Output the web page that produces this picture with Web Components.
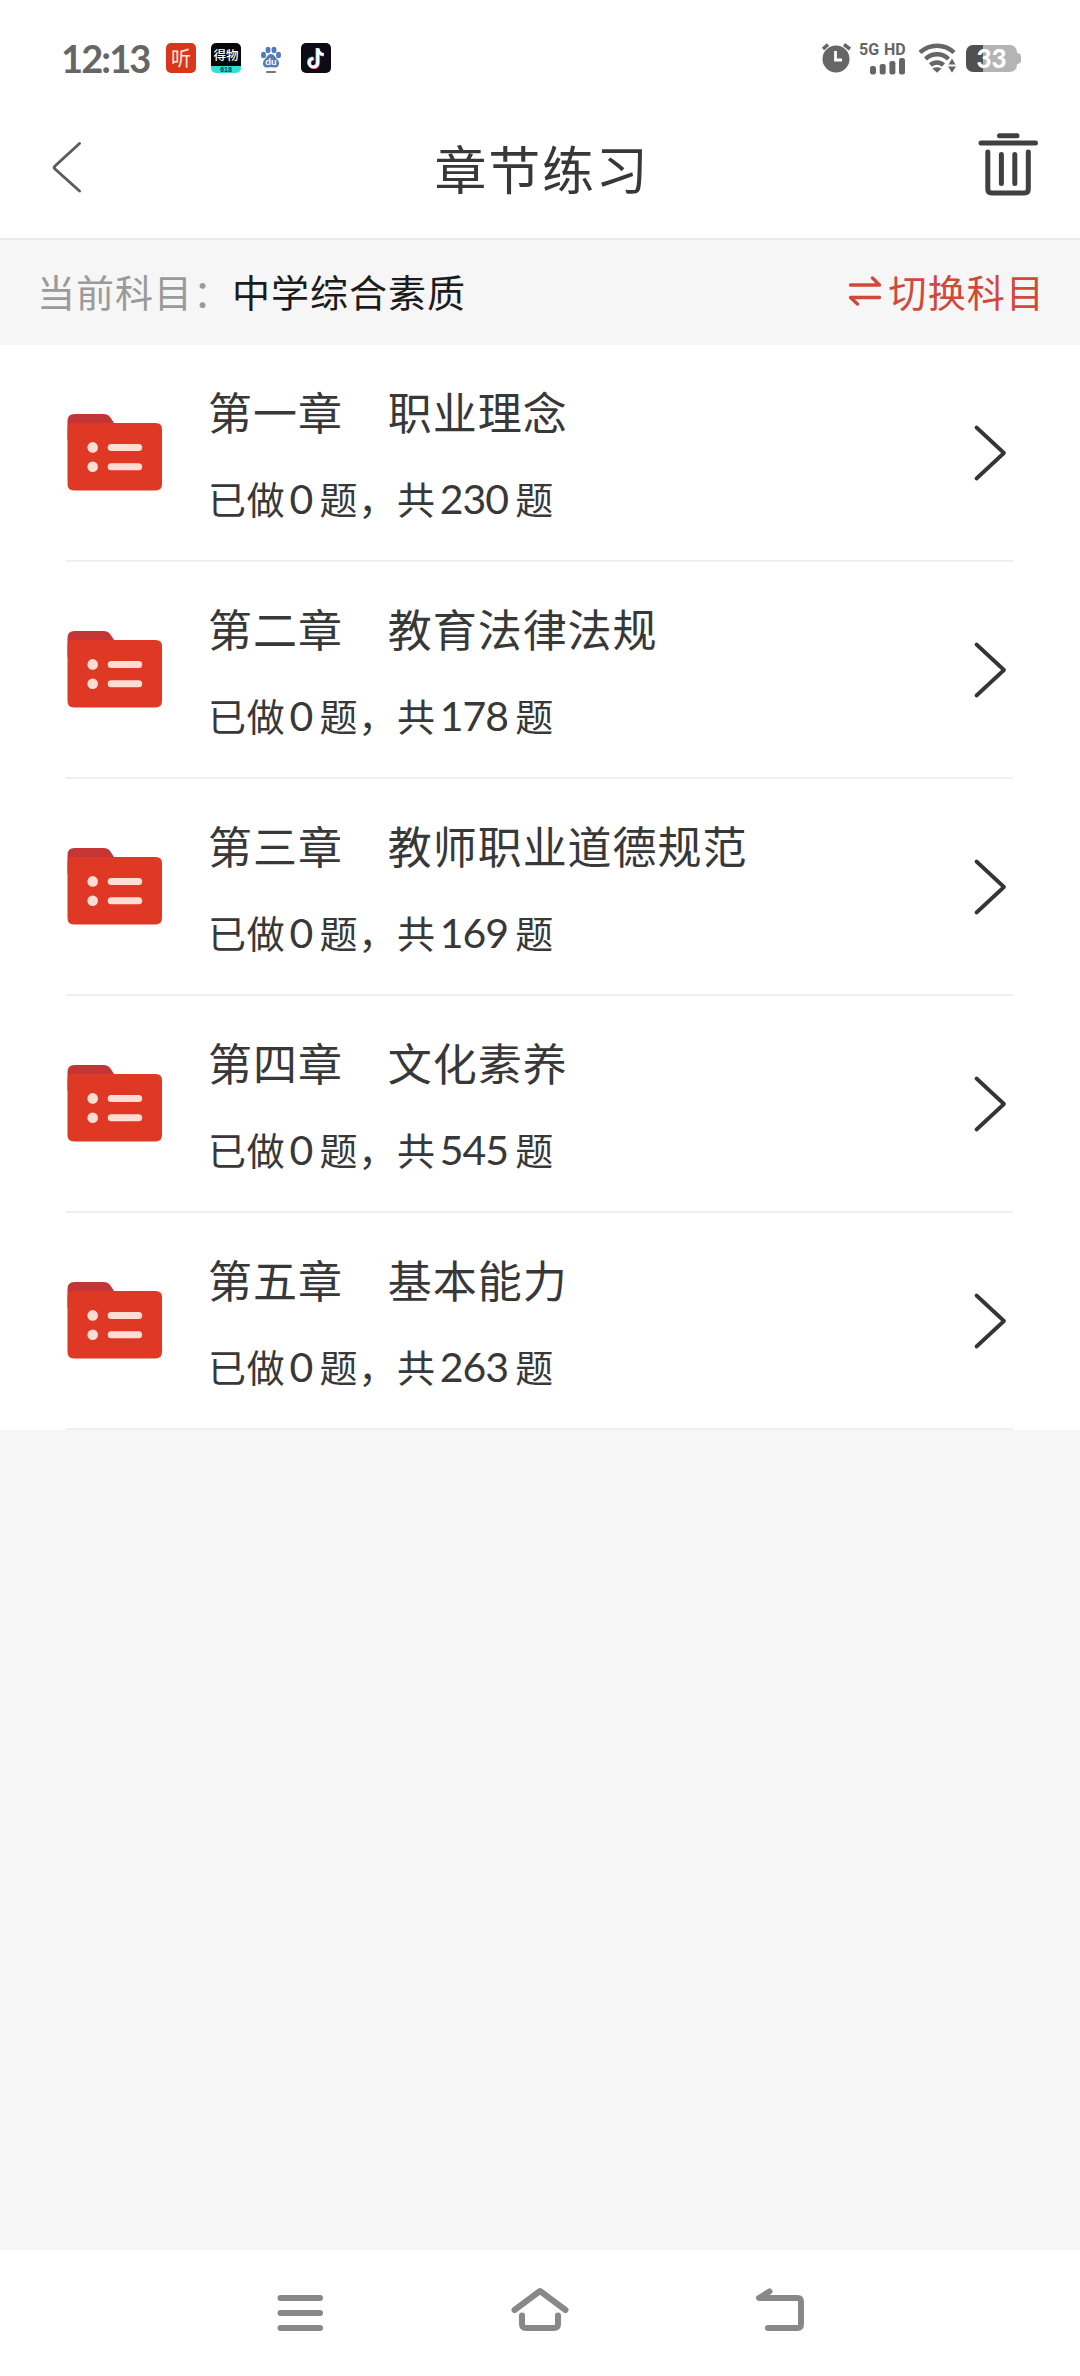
<!DOCTYPE html>
<html lang="zh-CN">
<head>
<meta charset="utf-8">
<title>章节练习</title>
<style>
html,body{margin:0;padding:0;background:#f6f6f6}
body{width:1080px;height:2376px;overflow:hidden;font-family:"Noto Sans CJK SC",sans-serif;color:#383838}
</style>
</head>
<body>
<practice-screen>
  <status-bar slot="top" time="12:13" level="33"></status-bar>
  <title-bar slot="top">章节练习</title-bar>
  <subject-bar slot="top" label="当前科目：" action="切换科目">中学综合素质</subject-bar>
  <chapter-row done="0" total="230">第一章　职业理念</chapter-row>
  <chapter-row done="0" total="178">第二章　教育法律法规</chapter-row>
  <chapter-row done="0" total="169">第三章　教师职业道德规范</chapter-row>
  <chapter-row done="0" total="545">第四章　文化素养</chapter-row>
  <chapter-row done="0" total="263">第五章　基本能力</chapter-row>
  <nav-bar slot="bottom"></nav-bar>
</practice-screen>
<script>
function define(name, render) {
  customElements.define(name, class extends HTMLElement {
    constructor() {
      super();
      this.attachShadow({mode: 'open'});
    }
    connectedCallback() {
      this.shadowRoot.innerHTML = render(this);
    }
  });
}

define('practice-screen', () => `
<style>
:host{display:flex;flex-direction:column;width:1080px;height:2376px;background:#f6f6f6}
main{flex:1}
.list{background:#fff}
</style>
<slot name="top"></slot>
<main><div class="list"><slot></slot></div></main>
<slot name="bottom"></slot>`);

define('status-bar', el => `
<style>
:host{display:flex;justify-content:space-between;box-sizing:border-box;height:84px;padding:32px 59px 0 61px;background:#fff;color:#666}
.left,.right{display:flex;height:52px;align-items:center}
.time{font:700 38px/52px Lato,sans-serif;width:105px;letter-spacing:-1.900px;white-space:nowrap}
.app{width:30px;height:30px;margin-right:15px;border-radius:5px;display:flex;flex-direction:column;align-items:center;box-sizing:border-box;white-space:nowrap}
.ting{background:#d8371b;color:#ffe9dc;font:400 20px/29px "Noto Sans CJK SC",sans-serif}
.dewu{background:linear-gradient(#050808 23px,#35dcd8 23px);color:#fff;font:500 12.500px/23px "Noto Sans CJK SC",sans-serif}
.dewu b{font:700 7px/7px "Liberation Sans",sans-serif;color:#044}
.app svg{display:block}
.net{width:48px;display:flex;flex-direction:column;align-items:flex-start;margin:0 12px 0 8px}
.net span{font:700 16px/15px Roboto,sans-serif;white-space:nowrap;height:15px;word-spacing:1px}
.net svg{margin-left:11px}
.bat{display:flex;width:51px;height:27px;border-radius:7px;background:linear-gradient(90deg,#505050 17px,#b4b4b4 17px);color:#fff;justify-content:center;font:900 26px/27px Lato,sans-serif;margin-left:9px}
.nub{width:4px;height:11px;background:#b4b4b4;border-radius:0 5px 5px 0}
svg{display:block;flex:none}
</style>
<div class="left">
  <span class="time">${el.getAttribute('time')}</span>
  <span class="app ting">听</span>
  <span class="app dewu">得物<b>618</b></span>
  <span class="app"><svg width="30" height="30" viewBox="0 0 30 30"><g fill="#527bb9"><ellipse cx="7.5" cy="12" rx="2.5" ry="3.2"/><ellipse cx="12" cy="7" rx="2.5" ry="3.3"/><ellipse cx="18" cy="7" rx="2.5" ry="3.3"/><ellipse cx="22.5" cy="12" rx="2.5" ry="3.2"/><path d="M15 11c-3 0-4 3-6 5-4 4-1.500 9 2 8.500 3-.5 5-.5 8 0 3.500.5 6-4.500 2-8.500-2-2-3-5-6-5z"/></g><text x="15" y="22" text-anchor="middle" font-family="Lato,sans-serif" font-weight="700" font-size="10" fill="#fff">du</text><rect x="10" y="28" width="10" height="2" rx="1" fill="#777"/></svg></span>
  <span class="app" style="background:#0d0b15"><svg width="30" height="30" viewBox="0 0 30 30" fill="none" stroke-width="3"><path d="M16 5v14.200a4.300 4.300 0 1 1-4.300-4.300M16 6.500c.5 3 2.700 5 6 5.200" stroke="#45d8dc"/><path d="M17.600 6.300v14a4.300 4.300 0 1 1-4.300-4.300M17.500 7c.6 3 2.800 5 5.500 5.200" stroke="#e63862"/><path d="M16.800 5.300v14.500a4.300 4.300 0 1 1-4.300-4.300M17 6c.5 3.200 2.700 5.300 5.800 5.600" stroke="#fff"/></svg></span>
</div>
<div class="right">
  <svg width="30" height="32" viewBox="819 43 30 32"><circle cx="834" cy="60" r="13.500" fill="#666"/><path d="M821 50l5-4.500M842 45.500l6 4.500" stroke="#666" stroke-width="3.600"/><path d="M833.500 52v9h6.500" fill="none" stroke="#fff" stroke-width="2.800"/></svg>
  <div class="net"><span>5G HD</span><svg width="36" height="18" viewBox="0 0 36 18" fill="#666"><rect y="9" width="6" height="8.500" rx="2.200"/><rect x="9.700" y="7" width="6" height="10.500" rx="2.200"/><rect x="19.400" y="4" width="6" height="13.500" rx="2.200"/><rect x="29" y="1" width="6" height="16.500" rx="2.200"/></svg></div>
  <svg width="38" height="30" viewBox="918 43.500 38 30"><g fill="none" stroke="#666" stroke-width="4.500"><path d="M919 53a24.500 24.500 0 0 1 34 0M924.500 59.500a16.500 16.500 0 0 1 23 0M929.500 65.500a9.500 9.500 0 0 1 13 0"/></g><path d="M931.500 69q4.500-2.500 9 0l-4.500 4.300z" fill="#666"/><path d="M945.500 66.500l5.500-9.500 5.500 9.500-5.500 8.500z" fill="#666" stroke="#fff" stroke-width="2"/><path d="M945 66h12" stroke="#fff" stroke-width="2"/></svg>
  <div class="bat">${el.getAttribute('level')}</div><div class="nub"></div>
</div>`);

define('title-bar', () => `
<style>
:host{display:flex;align-items:center;justify-content:space-between;box-sizing:border-box;height:156px;padding:0 40px 0 50px;background:#fff;border-bottom:2px solid #e9e9e9}
h1{font-size:52px;line-height:80px;font-weight:400;letter-spacing:1.8px;margin:14px 4px 0 0;color:#383838}
svg{display:block;fill:none;stroke-linecap:round;stroke-linejoin:round}
.hit{width:62px}
</style>
<div class="hit"><svg style="margin-top:12px" width="34" height="54" viewBox="50 140 34 54" stroke="#5d5d5d" stroke-width="3"><path d="M79.500 143.500L55 166q-1.500 1.500 0 3L79.500 191"/></svg></div>
<h1><slot></slot></h1>
<svg style="margin-top:7px" width="64" height="66" viewBox="976 131 64 66" stroke="#404040" stroke-width="5"><path d="M999.500 134.800h17.500M981 142h54.500M987.800 151v37q0 4 4 4h32.500q4 0 4-4v-37M1001.400 153.500v29M1014.800 153.500v29"/></svg>`);

define('subject-bar', el => `
<style>
:host{display:flex;align-items:center;justify-content:space-between;box-sizing:border-box;height:105px;padding:0 35px 3px 37px;background:#f6f6f6;font-size:38px;line-height:60px;letter-spacing:1px;color:#1c1c1c}
.label{color:#9a9a9a}
.switch{display:flex;align-items:center;gap:7px;color:#cf4a3a;letter-spacing:1.100px}
svg{display:block}
</style>
<div><span class="label">${el.getAttribute('label')}</span><slot></slot></div>
<div class="switch"><svg width="34" height="30" viewBox="848 277 34 30" fill="none" stroke="currentColor" stroke-width="3.400" stroke-linecap="round" stroke-linejoin="round"><path d="M850.500 286h29l-7-7M879.500 298.500h-29l7 6.500"/></svg><span>${el.getAttribute('action')}</span></div>`);

define('chapter-row', el => `
<style>
:host{display:flex;align-items:center;box-sizing:border-box;height:217px;margin:0 67px 0 66px;border-bottom:2px solid #efefef;color:#383838}
svg{display:block;flex:none}
.folder{margin-bottom:2px}
.body{flex:1;margin-left:45px;height:215px;display:flex;flex-direction:column}
.name{font-size:44px;line-height:64px;letter-spacing:.95px;margin-top:34px;white-space:nowrap}
.count{font-size:38px;line-height:56px;letter-spacing:.8px;margin-top:27px;white-space:nowrap;display:flex;align-items:baseline}
.num{font:400 41px/56px Lato,sans-serif;letter-spacing:-1px;margin:0 7px 0 4px}
</style>
<svg class="folder" width="97" height="80" viewBox="66 412 97 80"><path d="M67.500 440v-19q0-7 7-7h29c6 0 8 5 10.500 9v17z" fill="#c43536"/><path d="M67.500 428q0-5 6-5h82q6.500 0 6.500 6v55q0 6.500-6.500 6.500h-81.500q-6.500 0-6.500-6.500z" fill="#df3926"/><g fill="#ffddd3"><circle cx="92.700" cy="447.400" r="5.300"/><circle cx="92.700" cy="466.700" r="5.300"/><rect x="107.700" y="444" width="34.500" height="7" rx="3.500"/><rect x="107.700" y="463.200" width="34.500" height="7" rx="3.500"/></g></svg>
<div class="body"><div class="name"><slot></slot></div><div class="count"><span>已做</span><span class="num">${el.getAttribute('done')}</span><span>题，共</span><span class="num">${el.getAttribute('total')}</span><span>题</span></div></div>
<svg style="margin-right:6px" width="34" height="58" viewBox="973 424 34 58" fill="none" stroke="#353535" stroke-width="3.800" stroke-linecap="round" stroke-linejoin="round"><path d="M976.500 427.500L1004 453l-27.500 25.500"/></svg>`);

define('nav-bar', () => `
<style>
:host{display:flex;justify-content:center;gap:180px;padding-top:34px;box-sizing:border-box;height:126px;background:#fff}
svg{display:block;fill:none;stroke:#888;stroke-width:6;stroke-linecap:round;stroke-linejoin:round}
</style>
<svg width="60" height="54" viewBox="270 2284 60 54"><path d="M280.500 2298h39.500M280.500 2313h39.500M280.500 2328h39.500"/></svg>
<svg width="60" height="54" viewBox="510 2284 60 54"><path d="M514.500 2310L540 2291l25.500 19M522 2315.500v8.500q0 4 4 4h28q4 0 4-4v-8.500"/></svg>
<svg width="60" height="54" viewBox="750 2284 60 54"><path d="M769.500 2291.500L759 2298h38.500q3.500 0 3.500 4v22q0 4-3.500 4h-29.500"/></svg>`);
</script>
</body>
</html>
